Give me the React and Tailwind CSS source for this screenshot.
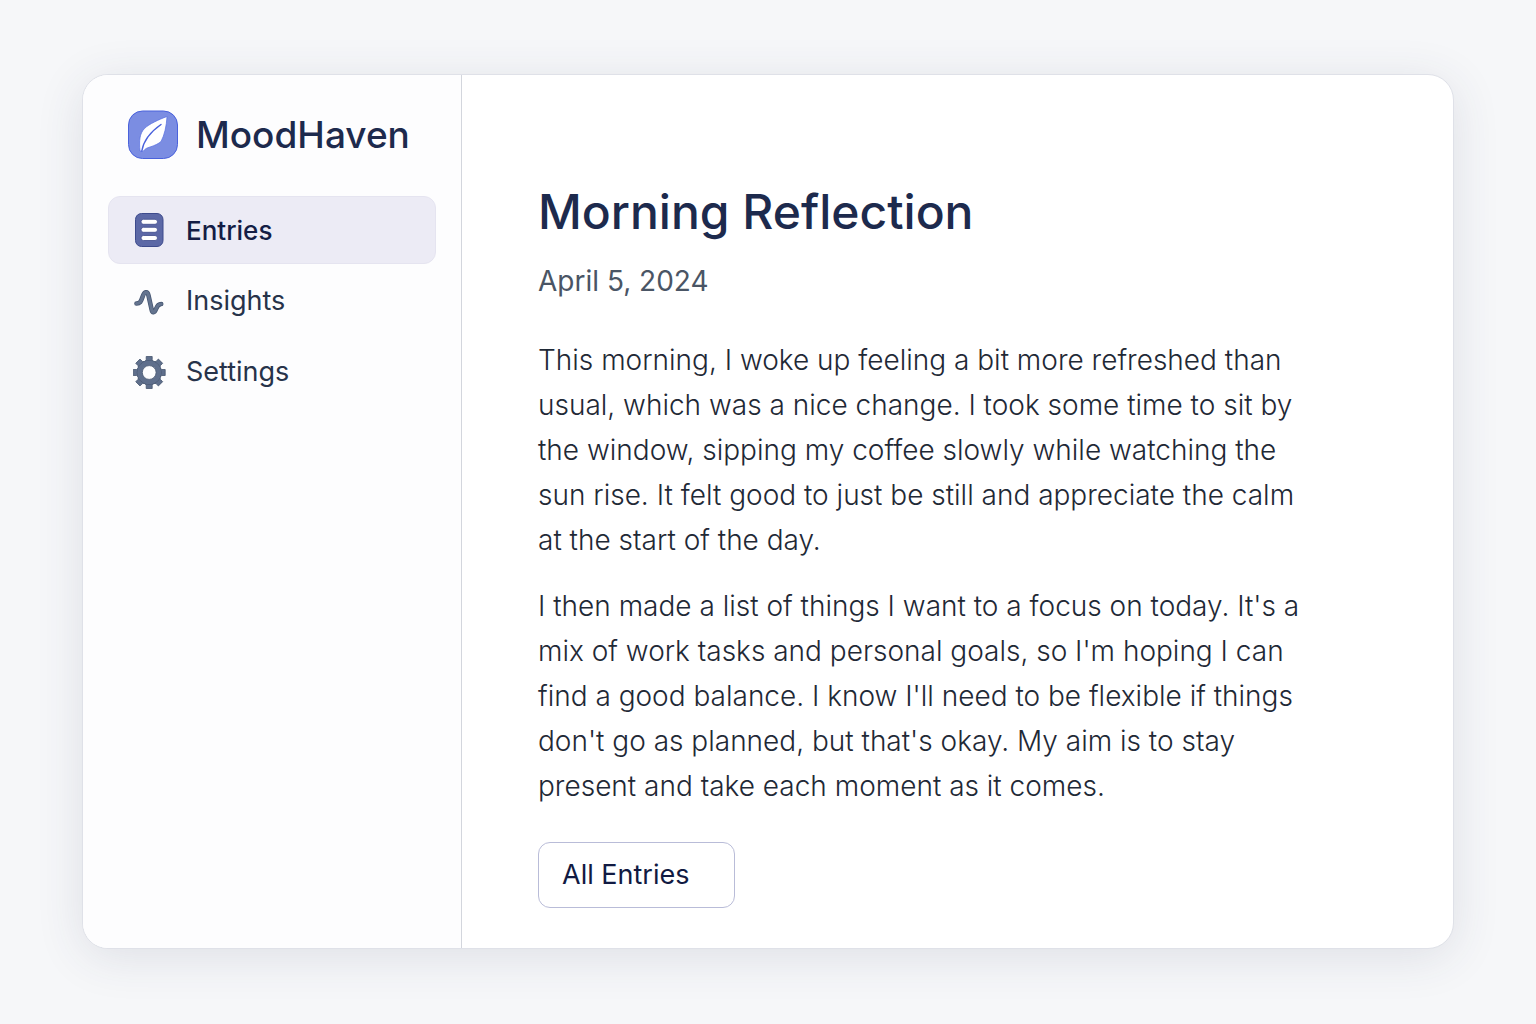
function LeafLogo() {
  return (
    <svg viewBox="0 0 50 50" className="size-[50px] shrink-0" aria-hidden="true">
      <rect x="0.5" y="1" width="49" height="47.5" rx="14" fill="#7b8de2" stroke="#4a62dc" />
      <path
        d="M39 6.500C31 9.500 21 14 16.500 18.500C11.500 23.500 11 31 12 41L15.200 41.200C17 38.800 19 37.800 22 37C26 35.800 31 33.500 33 31.500C36.500 25 38.500 16 39 6.500Z"
        fill="#fff"
        stroke="#536be0"
        strokeWidth="0.7"
        strokeLinejoin="round"
      />
      <path d="M13.800 41C15.500 30.500 23 21.500 33 14.500" fill="none" stroke="#4a62dc" strokeWidth="1.400" strokeLinecap="round" />
    </svg>
  );
}

function EntriesIcon() {
  return (
    <svg viewBox="0 0 34 36" className="h-9 w-[34px] shrink-0" aria-hidden="true">
      <rect x="2.500" y="1.500" width="27.500" height="33" rx="6" fill="#5c68a6" stroke="#3d4a8c" />
      <g fill="#fff" stroke="#3d4a8c" strokeWidth="0.8">
        <rect x="8" y="7.300" width="16.500" height="5" rx="2.500" />
        <rect x="8" y="15.300" width="16.500" height="5" rx="2.500" />
        <rect x="8" y="23.500" width="16.500" height="5" rx="2.500" />
      </g>
    </svg>
  );
}

function InsightsIcon() {
  const wave = "M3.500 19.500C7 19.500 8 17.500 9.500 13C11.500 7 14.500 7 15.500 11.500L18.500 25C19.300 29.500 21.500 29 23 25C24.300 21.500 25.500 20 28.200 20";
  return (
    <svg viewBox="0 0 34 36" className="h-9 w-[34px] shrink-0" fill="none" strokeLinecap="round" strokeLinejoin="round" aria-hidden="true">
      <path d={wave} stroke="#43536f" strokeWidth="4.600" />
      <path d={wave} stroke="#64748f" strokeWidth="3.200" />
    </svg>
  );
}

function SettingsIcon() {
  const angles = [0, 45, 90, 135, 180, 225, 270, 315];
  return (
    <svg viewBox="0 0 34 36" className="h-9 w-[34px] shrink-0" aria-hidden="true">
      <g fill="#5f6f8c" stroke="#46566f" strokeWidth="0.8" strokeLinejoin="round">
        {angles.map((a) => (
          <path key={a} d="M11.500 7L13.200 4.800V1.500H19.200V4.800L20.900 7Z" transform={`rotate(${a} 16.200 17.500)`} />
        ))}
        <circle cx="16.200" cy="17.500" r="12" />
      </g>
      <circle cx="16.200" cy="17.500" r="11.800" fill="#5f6f8c" />
      <circle cx="16.200" cy="17.500" r="6.900" fill="#fdfdfe" stroke="#46566f" strokeWidth="0.8" />
    </svg>
  );
}

const items = [
  { label: "Entries", Icon: EntriesIcon, active: true },
  { label: "Insights", Icon: InsightsIcon },
  { label: "Settings", Icon: SettingsIcon },
];

export default function App() {
  return (
    <div className="flex min-h-screen bg-[#f6f7f9] px-[82px] pt-[74px] pb-[75px] font-['Inter',sans-serif]">
      <div className="flex flex-1 overflow-hidden rounded-[26px] border border-[#dfe1e8] bg-white shadow-[0_8px_48px_rgba(50,55,90,0.12)]">
        <aside className="w-[379px] shrink-0 border-r border-[#d3d6dd] bg-[#fdfdfe] px-[25px] pt-[35px]">
          <div className="flex items-center gap-[18px] pl-5">
            <LeafLogo />
            <span className="text-[37px] leading-[50px] font-medium text-[#1d2a4d]">MoodHaven</span>
          </div>
          <nav className="mt-9 flex flex-col gap-1">
            {items.map(({ label, Icon, active }) => (
              <a
                key={label}
                href="#"
                aria-current={active ? "page" : undefined}
                className={
                  active
                    ? "flex h-[68px] items-center gap-[19px] rounded-xl border border-[#e5e4f0] bg-[#ecebf5] px-6 text-[26px] font-medium text-[#141d45]"
                    : "flex h-[67px] items-center gap-[19px] rounded-xl border border-transparent px-6 text-[27px] text-[#27334a]"
                }
              >
                <Icon />
                {label}
              </a>
            ))}
          </nav>
        </aside>
        <main className="min-w-0 flex-1 px-[76px] pt-[105px] pb-10">
          <h1 className="text-[48px] leading-[64px] font-medium text-[#1d2a4d]">Morning Reflection</h1>
          <p className="mt-[15px] text-[28px] leading-[45px] text-[#4a5565]">April 5, 2024</p>
          <div className="mt-[34px] flex max-w-[784px] flex-col gap-[21px] text-[28px] leading-[45px] font-light text-[#1f2936]">
            <p>
              This morning, I woke up feeling a bit more refreshed than usual, which was a nice change. I took some time
              to sit by the window, sipping my coffee slowly while watching the sun rise. It felt good to just be still
              and appreciate the calm at the start of the day.
            </p>
            <p>
              I then made a list of things I want to a focus on today. It's a mix of work tasks and personal goals, so
              I'm hoping I can find a good balance. I know I'll need to be flexible if things don't go as planned, but
              that's okay. My aim is to stay present and take each moment as it comes.
            </p>
          </div>
          <button
            type="button"
            className="mt-[33px] flex h-[66px] w-[197px] items-center rounded-xl border border-[#b9bcd8] bg-white px-[23px] text-[27px] text-[#111a42]"
          >
            All Entries
          </button>
        </main>
      </div>
    </div>
  );
}
